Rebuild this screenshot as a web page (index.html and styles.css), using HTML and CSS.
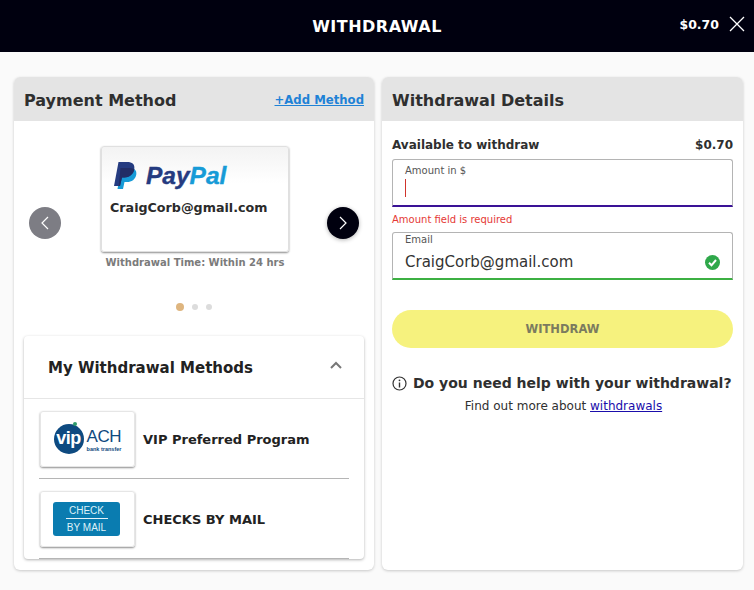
FILE: index.html
```html
<!DOCTYPE html>
<html>
  <head>
    <meta charset="utf-8">
    <title>Withdrawal</title>
    <link rel="stylesheet" href="styles.css">
  </head>
  <body>
    <div class="topbar">
      <div class="topbar-title">WITHDRAWAL</div>
      <div class="topbar-right">
        <span class="topbar-balance">$0.70</span>
        <svg class="close-icon" width="16" height="16" viewBox="0 0 16 16"><path d="M1 1L15 15M15 1L1 15" stroke="#fff" stroke-width="1.3" fill="none"/></svg>
      </div>
    </div>

    <div class="columns">
      <div class="panel panel-left">
        <div class="panel-head">
          <h2>Payment Method</h2>
          <a class="add-link" href="#">+Add Method</a>
        </div>

        <div class="carousel">
          <div class="arrow arrow-off">
            <svg width="10" height="16" viewBox="0 0 10 16"><path d="M8 2L2 8L8 14" stroke="#fff" stroke-width="1.2" fill="none"/></svg>
          </div>
          <div class="slide">
            <div class="pay-card">
              <div class="paypal">
                <svg width="23" height="27" viewBox="0 0 23 27">
                  <path d="M7 6H15C20 6 23 8 22.300 12.500C21.500 17.500 17.500 20 13 20H10.500L9 27H3.500Z" fill="#179bd7"/>
                  <path d="M4.500 0H13C18.500 0 21 2.500 20.300 7C19.500 12.500 15 15.500 10.500 15.500H8L6 24H0Z" fill="#253b80"/>
                  <path d="M6.500 6H14.500C15.500 6 19.500 6.500 20.300 7C19.500 12.500 15 15.500 10.500 15.500H8L6 24H4.700Z" fill="#222d65"/>
                </svg>
                <span class="paypal-word"><span class="pay">Pay</span><span class="pal">Pal</span></span>
              </div>
              <div class="pay-email">CraigCorb@gmail.com</div>
            </div>
            <div class="pay-time">Withdrawal Time: Within 24 hrs</div>
          </div>
          <div class="arrow">
            <svg width="10" height="16" viewBox="0 0 10 16"><path d="M2 2L8 8L2 14" stroke="#fff" stroke-width="1.2" fill="none"/></svg>
          </div>
        </div>

        <div class="dots">
          <span class="dot dot-on"></span>
          <span class="dot"></span>
          <span class="dot"></span>
        </div>

        <div class="methods">
          <div class="methods-head">
            <span>My Withdrawal Methods</span>
            <svg class="chevron" width="12" height="8" viewBox="0 0 12 8"><path d="M1 7L6 2L11 7" stroke="#777" stroke-width="2" fill="none"/></svg>
          </div>
          <div class="method">
            <div class="method-logo">
              <div class="vip-logo">
                <div class="vip-badge">vip<span class="vip-dot"></span></div>
                <div class="ach">
                  <div class="ach-big">ACH</div>
                  <div class="ach-small">bank transfer</div>
                </div>
              </div>
            </div>
            <span class="method-name">VIP Preferred Program</span>
          </div>
          <div class="method">
            <div class="method-logo">
              <div class="check-logo">
                <div class="check-top">CHECK</div>
                <div>BY MAIL</div>
              </div>
            </div>
            <span class="method-name">CHECKS BY MAIL</span>
          </div>
        </div>
      </div>

      <div class="panel panel-right">
        <div class="panel-head">
          <h2>Withdrawal Details</h2>
        </div>
        <div class="details">
          <div class="available">
            <span>Available to withdraw</span>
            <span>$0.70</span>
          </div>
          <div class="field field-focus">
            <label>Amount in $</label>
            <div class="caret"></div>
          </div>
          <div class="field-error">Amount field is required</div>
          <div class="field field-ok">
            <label>Email</label>
            <div class="field-value">
              <span>CraigCorb@gmail.com</span>
              <svg width="15" height="15" viewBox="0 0 15 15"><circle cx="7.500" cy="7.500" r="7.500" fill="#2fa84a"/><path d="M4 7.800L6.500 10.300L11 5" stroke="#fff" stroke-width="2" fill="none"/></svg>
            </div>
          </div>
          <div class="withdraw-btn">WITHDRAW</div>
          <div class="help">
            <svg width="15" height="15" viewBox="0 0 15 15"><circle cx="7.500" cy="7.500" r="6.500" stroke="#333" stroke-width="1.200" fill="none"/><path d="M7.500 6.500V11.500" stroke="#333" stroke-width="1.400"/><circle cx="7.500" cy="4.300" r="0.900" fill="#333"/></svg>
            <span>Do you need help with your withdrawal?</span>
          </div>
          <div class="help-more">Find out more about <a href="#">withdrawals</a></div>
        </div>
      </div>
    </div>
  </body>
</html>
```

FILE: styles.css
```css
html, body {
  margin: 0;
  height: 590px;
  overflow: hidden;
}
body {
  background: #fafafa;
  font-family: "DejaVu Sans", Verdana, sans-serif;
  color: #2b2b2b;
}
.topbar {
  height: 52px;
  background: #00000f;
  color: #fff;
  display: flex;
  align-items: center;
  justify-content: center;
  position: relative;
}
.topbar-title {
  font-weight: bold;
  font-size: 16px;
  letter-spacing: 0.5px;
}
.topbar-right {
  position: absolute;
  right: 9px;
  top: 16px;
  display: flex;
  align-items: center;
  gap: 10px;
}
.topbar-balance {
  font-weight: bold;
  font-size: 12.500px;
}
.columns {
  display: flex;
  gap: 8px;
  padding: 25px 0 0 14px;
}
.panel {
  height: 493px;
  background: #fff;
  border-radius: 6px;
  box-shadow: 0 1px 3px rgba(0, 0, 0, 0.2);
  overflow: hidden;
}
.panel-left {
  width: 360px;
}
.panel-right {
  width: 361px;
}
.panel-head {
  height: 42px;
  padding: 2px 10px 0;
  background: #e4e4e4;
  display: flex;
  align-items: center;
  justify-content: space-between;
}
.panel-head h2 {
  margin: 0;
  font-size: 16px;
  color: #2f2f2f;
}
.add-link {
  font-size: 11.700px;
  font-weight: bold;
  color: #1f82d6;
}

.carousel {
  display: flex;
  padding: 25px 15px 0;
}
.arrow {
  width: 32px;
  height: 32px;
  margin-top: 61px;
  border-radius: 50%;
  background: #00000f;
  box-shadow: 0 1px 4px rgba(0, 0, 0, 0.3);
  display: flex;
  align-items: center;
  justify-content: center;
}
.arrow-off {
  background: #7d7d84;
  box-shadow: none;
}
.slide {
  width: 188px;
  margin: 0 38px 0 40px;
}
.pay-card {
  height: 104px;
  width: 186px;
  border: 1px solid #e0e0e0;
  border-radius: 3px;
  box-shadow: 0 1px 2px rgba(0, 0, 0, 0.45);
  background: linear-gradient(#f3f3f3, #fff 35%);
}
.paypal {
  display: flex;
  align-items: center;
  gap: 9px;
  padding: 15px 0 0 12px;
}
.paypal-word {
  font-family: "Liberation Sans", Arial, sans-serif;
  font-weight: bold;
  font-style: italic;
  font-size: 24.500px;
  line-height: 27px;
  -webkit-text-stroke: 0.4px;
}
.pay {
  color: #253b80;
}
.pal {
  color: #179bd7;
}
.pay-email {
  margin: 11px 0 0 8px;
  font-size: 12.700px;
  font-weight: bold;
  color: #2b2b2b;
}
.pay-time {
  margin-top: 5px;
  text-align: center;
  font-size: 10px;
  font-weight: bold;
  color: #7b7b7b;
  white-space: nowrap;
}
.dots {
  display: flex;
  justify-content: center;
  align-items: center;
  gap: 8px;
  margin-top: 34px;
  height: 10px;
}
.dot {
  width: 6px;
  height: 6px;
  border-radius: 50%;
  background: #dcdcdc;
}
.dot-on {
  width: 8px;
  height: 8px;
  background: #deb57f;
}

.methods {
  margin: 24px 10px 0;
  height: 223px;
  border-radius: 4px;
  box-shadow: 0 1px 3px rgba(0, 0, 0, 0.3);
  overflow: hidden;
  background: #fff;
}
.methods-head {
  height: 60px;
  padding: 2px 22px 0 24px;
  border-bottom: 1px solid #e6e6e6;
  display: flex;
  align-items: center;
  justify-content: space-between;
  font-size: 15px;
  font-weight: bold;
  color: #222;
}
.chevron {
  margin-bottom: 6px;
}
.method {
  height: 79px;
  margin: 0 15px;
  border-bottom: 1px solid #b5b5b5;
  display: flex;
  align-items: center;
  gap: 8px;
}
.method-logo {
  width: 93px;
  height: 54px;
  margin-left: 1px;
  border: 1px solid #e6e6e6;
  border-radius: 3px;
  box-shadow: 0 1px 2px rgba(0, 0, 0, 0.45);
  display: flex;
  align-items: center;
  justify-content: center;
}
.method-name {
  padding-top: 2px;
  font-size: 13px;
  font-weight: bold;
  color: #222;
}
.vip-logo {
  display: flex;
  align-items: center;
  gap: 3px;
}
.vip-badge {
  width: 30px;
  height: 30px;
  border-radius: 50%;
  background: #0e4a80;
  color: #fff;
  font-family: "Liberation Sans", Arial, sans-serif;
  font-size: 18px;
  font-weight: bold;
  line-height: 28px;
  text-align: center;
  letter-spacing: -0.5px;
  position: relative;
}
.vip-dot {
  position: absolute;
  top: -2px;
  right: 7px;
  width: 4px;
  height: 4px;
  border-radius: 50%;
  background: #2e9a6a;
}
.ach {
  font-family: "Liberation Sans", Arial, sans-serif;
  color: #0e4a80;
  margin-top: 2px;
}
.ach-big {
  font-size: 17px;
  line-height: 19px;
  letter-spacing: -0.5px;
}
.ach-small {
  font-size: 5.500px;
  line-height: 6px;
  font-weight: bold;
}
.check-logo {
  width: 67px;
  height: 34px;
  margin-right: 2px;
  padding-top: 2px;
  box-sizing: border-box;
  border-radius: 3px;
  background: #0a7cb0;
  color: #dff1f8;
  font-family: "Liberation Sans", Arial, sans-serif;
  font-size: 10px;
  text-align: center;
  line-height: 14px;
}
.check-top {
  width: 42px;
  margin: 0 auto 2px;
  border-bottom: 1px solid #e6f4fa;
}

.details {
  padding: 17px 10px 0;
}
.available {
  display: flex;
  justify-content: space-between;
  font-size: 12px;
  font-weight: bold;
  color: #2f2f2f;
  line-height: 15px;
}
.field {
  height: 48px;
  margin-top: 6px;
  box-sizing: border-box;
  border: 1px solid #b4b4b4;
  border-radius: 3px 3px 0 0;
  padding: 0 12px;
}
.field label {
  display: block;
  font-size: 10px;
  color: #555;
  line-height: 12px;
  padding-top: 5px;
}
.field-focus {
  border-bottom: 2px solid #3a1296;
}
.caret {
  width: 1px;
  height: 18px;
  margin-top: 2px;
  background: #d0342c;
}
.field-error {
  margin-top: 7px;
  font-size: 10px;
  line-height: 12px;
  color: #e53935;
}
.field-ok {
  margin-top: 6px;
  border-bottom: 2px solid #3cb043;
}
.field-ok label {
  padding-top: 1px;
}
.field-value {
  display: flex;
  justify-content: space-between;
  align-items: center;
  margin-top: 5px;
  font-size: 15px;
  color: #333;
  line-height: 22px;
}
.withdraw-btn {
  height: 38px;
  margin-top: 30px;
  border-radius: 19px;
  background: #f6f27e;
  color: #7b7b5f;
  font-size: 11.500px;
  font-weight: bold;
  line-height: 38px;
  text-align: center;
}
.help {
  display: flex;
  align-items: center;
  gap: 6px;
  margin-top: 26px;
  font-size: 14px;
  font-weight: bold;
  line-height: 18px;
  color: #2f2f2f;
  white-space: nowrap;
}
.help-more {
  margin-top: 7px;
  padding-left: 2px;
  text-align: center;
  font-size: 12px;
  line-height: 15px;
  color: #2f2f2f;
}
.help-more a {
  color: #1a0dab;
}
```
